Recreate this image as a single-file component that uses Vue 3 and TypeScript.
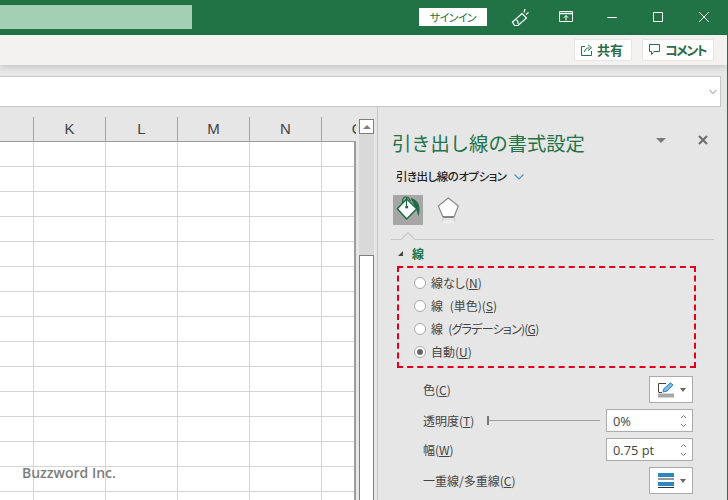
<script setup lang="ts">
const columns: { label: string; width: number }[] = [
  { label: '', width: 34 },
  { label: 'K', width: 72 },
  { label: 'L', width: 72 },
  { label: 'M', width: 72 },
  { label: 'N', width: 72 },
  { label: 'O', width: 72 },
]
const rows: number[] = Array.from({ length: 15 }, (_, i) => i)
const radios: { label: string; key: string; on: boolean; tight: boolean }[] = [
  { label: '線なし', key: 'N', on: false, tight: false },
  { label: '線 (単色)', key: 'S', on: false, tight: false },
  { label: '線 (グラデーション)', key: 'G', on: false, tight: true },
  { label: '自動', key: 'U', on: true, tight: false },
]
</script>

<template>
  <div class="app">
    <header class="titlebar">
      <div class="search"></div>
      <button class="signin">サインイン</button>
      <svg class="tb-icon brush" viewBox="0 0 18 19" width="18" height="19">
        <path d="M1.500 14L11 5.500L15.500 10L7 17.500H3.500Z M4.500 11.500Q7.500 12.500 7 16 M13 4.500L14 1 M15 6.500L17.500 4.500" fill="none" stroke="#fff" stroke-width="1.200" />
      </svg>
      <svg class="tb-icon display" viewBox="0 0 14 12" width="14" height="12">
        <path d="M.5.5H13.500V10.500H.5Z" fill="none" stroke="#fff" />
        <path d="M.5 2.500H13.500" stroke="#fff" stroke-width="1.500" />
        <path d="M7 9.500V4.500M4.800 6.800L7 4.500L9.200 6.800" fill="none" stroke="#fff" />
      </svg>
      <svg class="tb-icon minimize" viewBox="0 0 10 10" width="10" height="10"><path d="M0 5.500H10" stroke="#fff" /></svg>
      <svg class="tb-icon maximize" viewBox="0 0 10 10" width="10" height="10"><path d="M.5.5H9.500V9.500H.5Z" fill="none" stroke="#fff" /></svg>
      <svg class="tb-icon closer" viewBox="0 0 10 10" width="10" height="10"><path d="M0 0L10 10M10 0L0 10" stroke="#fff" /></svg>
    </header>

    <div class="ribbon">
      <button class="rb-btn share">
        <svg viewBox="0 0 12 12" width="12" height="12">
          <path d="M4 2.500H.5V11.500H10.500V7 M3.500 8C4 5 6 3.800 8.500 3.800 M7 .8L10.500 3.800L7 6.500" fill="none" stroke="#217346" />
        </svg>
        <span>共有</span>
      </button>
      <button class="rb-btn comment">
        <svg viewBox="0 0 12 12" width="12" height="12">
          <path d="M.5.5H10.500V7.500H5L2.500 10.500V7.500H.5Z" fill="none" stroke="#217346" />
        </svg>
        <span>コメント</span>
      </button>
    </div>

    <div class="formula-zone">
      <div class="formula">
        <svg viewBox="0 0 8 6" width="8" height="6"><path d="M.5 1L4 4.500L7.500 1" fill="none" stroke="#bdbdbd" stroke-width="1.500" /></svg>
      </div>
    </div>

    <main class="workspace">
      <section class="sheet">
        <div class="col-heads">
          <div v-for="c in columns" :key="c.label" class="col-head" :style="{ flexBasis: c.width + 'px' }">{{ c.label }}</div>
        </div>
        <div class="grid">
          <div v-for="r in rows" :key="r" class="row">
            <div v-for="c in columns" :key="c.label" class="cell" :style="{ flexBasis: c.width + 'px' }"></div>
          </div>
        </div>
        <div class="watermark">Buzzword Inc.</div>
      </section>

      <div class="scrollbar">
        <div class="scroll-up"><i></i></div>
        <div class="scroll-thumb"></div>
      </div>

      <aside class="panel">
        <div class="panel-head">
          <h1>引き出し線の書式設定</h1>
          <i class="menu-caret"></i>
          <svg class="panel-close" viewBox="0 0 10 10" width="10" height="10"><path d="M1 1L9 9M9 1L1 9" stroke="#6b6b6b" stroke-width="2" /></svg>
        </div>
        <div class="options">
          <span>引き出し線のオプション</span>
          <svg viewBox="0 0 10 6" width="10" height="6"><path d="M.5.5L5 5L9.500.5" fill="none" stroke="#4a90c8" stroke-width="1.200" /></svg>
        </div>
        <div class="tabs">
          <div class="tab active">
            <svg viewBox="0 0 30 30" width="30" height="30">
              <path d="M17.500 3C23 4 27 9 26.500 14C26.500 17 26 19 25.300 21.500C24.500 18 24 15 21.500 11Z" fill="#1f6b45" />
              <path d="M13.700 4L23.700 13.700L13.700 24L4.300 13.700Z" fill="#fff" stroke="#1f6b45" stroke-width="1.500" stroke-linejoin="round" />
              <path d="M9.500 8C9.500 3 11 2 13 2C15 2 16.500 3 17.500 6" fill="none" stroke="#1f6b45" stroke-width="1.200" />
              <path d="M13.500 2V11.500" stroke="#1f6b45" stroke-width="1.200" />
              <circle cx="13.700" cy="12" r="1.600" fill="#1f6b45" />
            </svg>
          </div>
          <div class="tab">
            <svg viewBox="0 0 30 30" width="30" height="30">
              <path d="M15.300 3L25.300 11L21 22H10L5.300 11Z" fill="#fff" stroke="#8a8a8a" stroke-width="1.200" stroke-linejoin="round" />
              <path d="M10 22H21" stroke="#707070" stroke-width="1.500" />
              <path d="M10 27H21" stroke="#f2f2f2" stroke-width="1.500" />
              <path d="M10 22.500L9 27M21 22.500L22 27" stroke="#d0d0d0" />
            </svg>
          </div>
        </div>
        <div class="tab-rule"><i></i></div>

        <div class="section-head"><i></i><span>線</span></div>
        <div class="radio-box">
          <label v-for="o in radios" :key="o.key" class="radio">
            <span class="dot" :class="{ on: o.on }"></span>
            <span class="radio-text" :class="{ tight: o.tight }">{{ o.label }}(<u>{{ o.key }}</u>)</span>
          </label>
        </div>

        <div class="field f-color">
          <span>色(<u>C</u>)</span>
          <button class="pick">
            <svg viewBox="0 0 16 16" width="16" height="16">
              <path d="M.5 10V1.500H8" fill="none" stroke="#444" />
              <path d="M.5 10.500H4" fill="none" stroke="#444" />
              <path d="M5 10L6 6.500L12.500 .8L15 3L9 9Z" fill="#7db9e4" stroke="#2e86c1" />
              <rect x="0" y="11.500" width="16" height="4" fill="#a8a8a8" />
            </svg>
            <i class="caret"></i>
          </button>
        </div>
        <div class="field f-trans">
          <span class="trans-label">透明度(<u>T</u>)</span>
          <div class="slider"><i></i></div>
          <div class="spin"><span>0%</span>
            <svg viewBox="0 0 7 14" width="7" height="14"><path d="M1 4L3.500 1.500L6 4M1 10L3.500 12.500L6 10" fill="none" stroke="#777" /></svg>
          </div>
        </div>
        <div class="field f-width">
          <span>幅(<u>W</u>)</span>
          <div class="spin"><span>0.75 pt</span>
            <svg viewBox="0 0 7 14" width="7" height="14"><path d="M1 4L3.500 1.500L6 4M1 10L3.500 12.500L6 10" fill="none" stroke="#777" /></svg>
          </div>
        </div>
        <div class="field f-compound">
          <span>一重線/多重線(<u>C</u>)</span>
          <button class="pick">
            <svg viewBox="0 0 16 15" width="16" height="15">
              <rect y="0" width="16" height="4" fill="#2e86c1" />
              <rect y="5.500" width="16" height="1" fill="#333" />
              <rect y="9" width="16" height="4" fill="#2e86c1" />
              <rect y="14" width="16" height="1" fill="#333" />
            </svg>
            <i class="caret"></i>
          </button>
        </div>
      </aside>
    </main>
  </div>
</template>

<style>
html, body { margin: 0; background: #e6e6e6; }
</style>

<style scoped>
.app {
  width: 728px;
  height: 500px;
  overflow: hidden;
  display: flex;
  flex-direction: column;
  box-sizing: border-box;
  border-right: 1px solid #217346;
  background: #e6e6e6;
  font-family: "Noto Sans CJK JP", "Noto Sans", sans-serif;
  font-feature-settings: "palt";
  color: #444;
}
button { font-family: inherit; padding: 0; font-feature-settings: inherit; }
.titlebar {
  height: 35px;
  flex: none;
  background: #217346;
  display: flex;
  align-items: center;
  margin-right: -1px;
}
.search { width: 192px; height: 24px; background: #a3cfb4; margin-right: 227px; margin-top: -1px; }
.signin {
  width: 68px; height: 18px; margin-top: -1px;
  background: #fff; border: 0; color: #217346;
  font-size: 11px; line-height: 18px; letter-spacing: -.6px;
}
.tb-icon { flex: none; margin-top: -1px; }
.brush { margin-left: 24px; }
.display { margin-left: 30px; }
.minimize { margin-left: 34px; }
.maximize { margin-left: 36px; }
.closer { margin-left: 36px; }

.ribbon {
  height: 30px;
  flex: none;
  background: #f3f2f1;
  display: flex;
  align-items: center;
  padding-left: 574px;
  gap: 10px;
  box-shadow: 0 2px 6px rgba(0,0,0,.14);
  position: relative;
}
.rb-btn {
  height: 22px;
  box-sizing: border-box;
  background: #fff;
  border: 1px solid #e8e6e4;
  border-radius: 2px;
  display: flex;
  align-items: center;
  color: #2b6b4b;
  font-size: 13px;
  font-weight: 700;
  margin-top: -1px;
  white-space: nowrap;
}
.share { width: 58px; padding-left: 6px; gap: 4px; }
.comment { width: 72px; padding-left: 6px; gap: 4px; }
.comment span { letter-spacing: -1.5px; }

.formula-zone { height: 42px; flex: none; padding-top: 11px; box-sizing: border-box; }
.formula {
  width: 721px;
  height: 31px;
  box-sizing: border-box;
  background: #fff;
  border: 1px solid #c6c6c6;
  border-left: 0;
  display: flex;
  align-items: center;
  justify-content: flex-end;
  padding-right: 3px;
}

.workspace { flex: 1; display: flex; min-height: 0; }
.sheet { width: 356px; flex: none; position: relative; overflow: hidden; padding-top: 10px; box-sizing: border-box; }
.col-heads { display: flex; height: 24px; }
.col-head {
  flex: none; box-sizing: border-box;
  border-right: 1px solid #a5a5a5;
  font: 15px/24px "Liberation Sans", sans-serif;
  color: #444;
  text-align: center;
}
.grid {
  border-top: 1px solid #9c9c9c;
  border-right: 2px solid #9c9c9c;
  background: #fff;
  height: 400px;
  box-sizing: border-box;
}
.row { display: flex; height: 25px; box-sizing: border-box; border-bottom: 1px solid #d4d4d4; }
.cell { flex: none; box-sizing: border-box; border-right: 1px solid #d4d4d4; }
.watermark {
  position: absolute;
  left: 22px; top: 356px;
  font: 600 14px/20px "Open Sans", sans-serif;
  color: #7c7c7c;
}

.scrollbar {
  width: 15px; flex: none;
  margin-left: 3px;
  margin-top: 12px;
  background: #d9d9d9;
  display: flex;
  flex-direction: column;
  justify-content: space-between;
}
.scroll-up, .scroll-thumb { box-sizing: border-box; background: #fff; border: 1px solid #7f7f7f; }
.scroll-up { height: 15px; display: flex; align-items: center; justify-content: center; }
.scroll-up i { border: 4px solid transparent; border-top: 0; border-bottom: 4px solid #7f7f7f; }
.scroll-thumb { height: 245px; border-bottom: 0; }

.panel {
  margin-left: 3px;
  flex: 1;
  min-width: 0;
  border-left: 1px solid #c6c6c6;
  display: flex;
  flex-direction: column;
  font-size: 12px;
}
.panel-head { height: 52px; flex: none; display: flex; align-items: center; padding: 19px 0 0 14px; box-sizing: border-box; }
.panel-head h1 {
  margin: 0; width: 264px;
  font-size: 19.300px; font-weight: 400; color: #217346; line-height: 26px;
  white-space: nowrap;
  font-feature-settings: normal;
}
.menu-caret { width: 0; height: 0; border: 5px solid transparent; border-top: 5px solid #7a7a7a; border-bottom: 0; margin-top: -5px; }
.panel-close { margin-left: 32px; margin-top: -5px; }
.options { display: flex; align-items: center; gap: 8px; margin-top: 6px; padding-left: 18px; height: 22px; flex: none; color: #222; font-size: 11.500px; font-weight: 500; }
.options span { letter-spacing: -.5px; }
.options svg { margin-top: 1px; }
.tabs { display: flex; align-items: center; padding-left: 15px; margin-top: 8px; gap: 10px; flex: none; }
.tab { width: 30px; height: 30px; display: flex; align-items: center; justify-content: center; }
.tab.active { background: #a6a6a6; }
.tab-rule { position: relative; height: 1px; flex: none; margin: 14px 13px 0 13px; background: #c6c6c6; }
.tab-rule i {
  position: absolute; left: 12px; top: -5px;
  width: 10px; height: 10px;
  box-sizing: border-box;
  background: #e6e6e6;
  border-left: 1px solid #c6c6c6;
  border-top: 1px solid #c6c6c6;
  transform: rotate(45deg);
}
.section-head { display: flex; align-items: center; height: 20px; flex: none; padding: 3px 0 0 20px; color: #217346; font-weight: 700; font-size: 12px; }
.section-head i { width: 0; height: 0; border-left: 5px solid transparent; border-bottom: 5px solid #444; margin-right: 9px; }
.radio-box {
  margin: 3px 0 0 19px;
  width: 299px; height: 102px;
  flex: none;
  box-sizing: border-box;
  border: 2px dashed #e0001b;
  display: flex; flex-direction: column;
  padding: 3px 0 0 15px;
}
.radio { height: 23px; flex: none; display: flex; align-items: center; gap: 5px; white-space: nowrap; color: #444; }
.radio-text { word-spacing: 4px; }
.radio-text.tight { letter-spacing: -.75px; }
.dot {
  width: 12px; height: 12px; box-sizing: border-box;
  border-radius: 50%; background: #fff; border: 1px solid #a8a8a8;
  position: relative; flex: none;
}
.dot.on::after { content: ""; position: absolute; left: 2px; top: 2px; width: 6px; height: 6px; border-radius: 50%; background: #666; }
.field { display: flex; align-items: center; padding-left: 45px; white-space: nowrap; color: #444; flex: none; }
.field > span:first-child { flex: 1; }
.f-color { margin-top: 8px; height: 27px; }
.f-trans { margin-top: 6px; height: 23px; }
.field > span.trans-label { flex: none; width: 64px; }
.f-width { margin-top: 6px; height: 23px; }
.f-compound { margin-top: 6px; height: 27px; }
.pick, .spin {
  flex: none;
  box-sizing: border-box;
  border: 1px solid #ababab;
  background: #fff;
  margin-right: 34px;
  color: #444;
}
.pick { width: 44px; height: 100%; display: flex; align-items: center; padding-left: 8px; gap: 6px; }
.caret { width: 0; height: 0; border: 3.500px solid transparent; border-top: 4px solid #666; border-bottom: 0; }
.spin { width: 87px; height: 100%; display: flex; align-items: center; justify-content: space-between; padding: 0 5px 0 6px; font-size: 12.800px; font-family: "Open Sans", sans-serif; }
.slider { flex: 1; height: 1px; background: #a0a0a0; margin-right: 6px; position: relative; }
.slider i { position: absolute; left: 0; top: -4px; width: 2px; height: 9px; background: #777; }
</style>
